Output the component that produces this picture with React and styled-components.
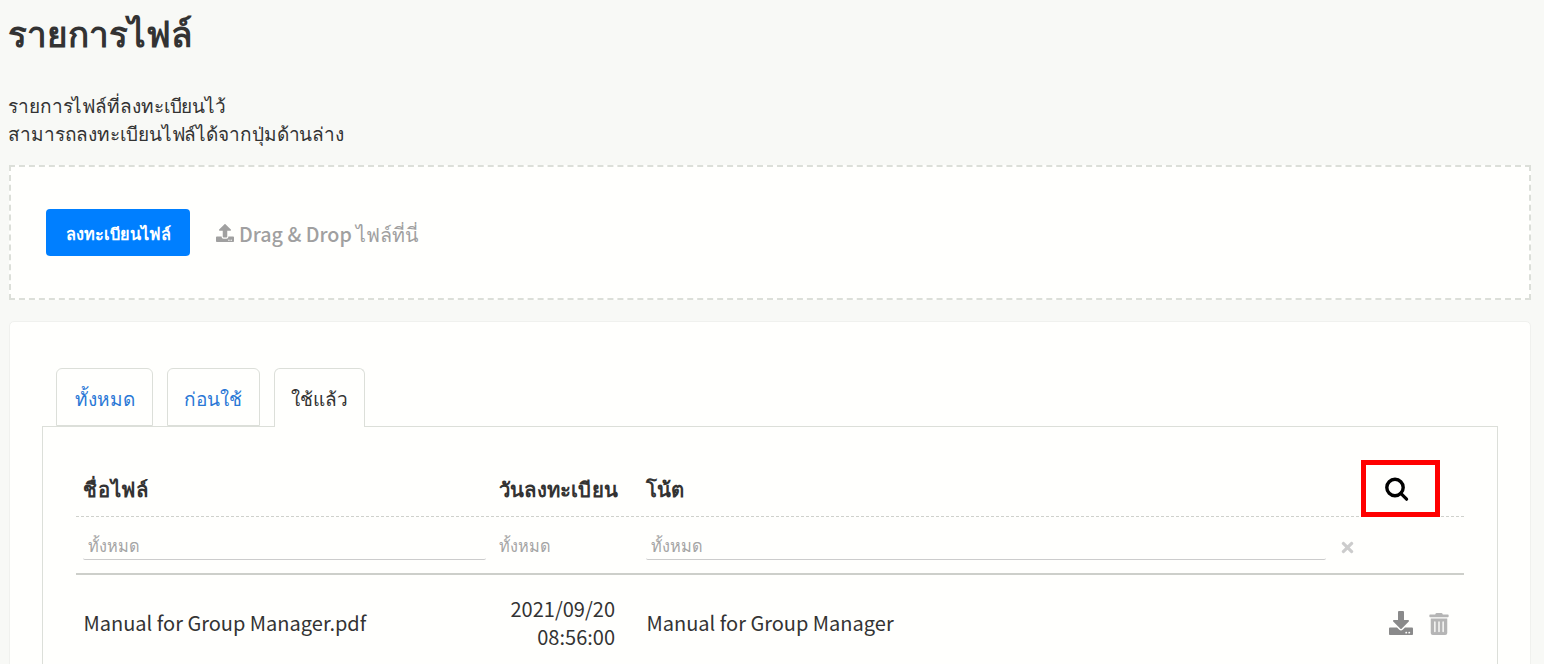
import React from 'react';
import styled, { createGlobalStyle } from 'styled-components';
import { FaUpload, FaDownload, FaTrashAlt, FaTimes } from 'react-icons/fa';

const Global = createGlobalStyle`
  html, body { margin: 0; height: 664px; overflow: hidden; background: #f8f9f6; }
  body { font-family: "Noto Sans CJK JP", "Noto Sans", "DejaVu Sans", sans-serif; color: #333; }
  * { box-sizing: border-box; }
`;
const Page = styled.div`padding: 0 13px 0 9px; height: 664px; overflow: hidden;`;
const Title = styled.h1`margin: 0 0 0 -1px; padding-top: 10px; height: 91px; font-size: 35px; line-height: 44px; font-weight: 700; color: #333;`;
const Desc = styled.p`margin: 0 0 0 -1px; font-size: 19px; letter-spacing: -0.1px; line-height: 28px; height: 56px; color: #333;`;
const Drop = styled.div`
  margin-top: 18px; height: 135px; background: #fffffd; border: 2px dashed #dcdfd9;
  display: flex; align-items: center; padding-left: 35px; gap: 26px;
`;
const Primary = styled.button`
  width: 144px; height: 47px; padding: 2px 0 0; border: 0; border-radius: 4px; background: #007fff; color: #fff;
  font: 700 16.3px "Noto Sans CJK JP", "Noto Sans", sans-serif;
`;
const Hint = styled.span`display: flex; align-items: center; gap: 5px; padding-top: 4px; color: #a0a0a0; font-size: 19.7px; font-weight: 500; svg { font-size: 18px; margin-top: -4px; }`;
const Card = styled.section`margin-top: 21px; height: 400px; background: #fffffd; border: 1px solid #f0f1ee; border-radius: 5px; padding: 46px 32px 0;`;
const Tabs = styled.div`display: flex; gap: 14px; padding-left: 14px; height: 59px;`;
const Tab = styled.div`
  width: ${p => p.$w}px; height: ${p => (p.$active ? 59 : 58)}px; border: 1px solid #dcdfd9; border-radius: 6px 6px 0 0; text-align: center; white-space: nowrap;
  ${p => p.$active ? 'border-bottom: 0; background: #fffffd; position: relative; z-index: 1; color: #333;' : 'color: #2a78d6;'}
  font-size: 19px; line-height: 58px;
`;
const Pane = styled.div`margin-top: -1px; height: 300px; border: 1px solid #dcdfd9; padding: 0 33px;`;
const Grid = styled.div`display: grid; grid-template-columns: 415px 148px 694px 131px;`;
const HeadRow = styled(Grid)`height: 90px; border-bottom: 1px dashed #cfd1cc; align-items: end; padding-bottom: 14px;`;
const Th = styled.div`padding-left: ${p => p.$pl ?? 7}px; font-size: 20.3px; font-weight: 700; line-height: 28px; color: #333; white-space: nowrap; letter-spacing: ${p => p.$ls ?? 0}px;`;
const SearchCell = styled.div`position: relative; height: 28px; display: flex; align-items: center; padding-left: 51px; svg { display: block; margin-top: 3px; }`;
const RedBox = styled.div`position: absolute; left: 28px; top: -14px; width: 79px; height: 57px; border: 5px solid #f00;`;
const FilterRow = styled(Grid)`height: 58px; border-bottom: 2px solid #cdcfca; padding-top: 13px;`;
const FilterCell = styled.div`padding: 0 ${p => p.$pr ?? 7}px 0 ${p => p.$pl ?? 7}px;`;
const Filter = styled.div`height: 30px; border-bottom: ${p => (p.$plain ? 0 : 1)}px solid #ccc; padding-left: ${p => p.$indent ?? 4}px; color: #a5a5a5; font-size: 16.3px; line-height: 30px; border-radius: 0 0 2px 2px; white-space: nowrap;`;
const Clear = styled.div`padding: 6px 0 0 6px; color: #ccc; font-size: 17px;`;
const Row = styled(Grid)`height: 96px; align-items: center; font-size: 20px; line-height: 28px;`;
const Cell = styled.div`padding: 0 7.5px; color: #333;`;
const DateCell = styled(Cell)`text-align: right; padding-right: 24px; white-space: nowrap;`;
const Actions = styled.div`display: flex; align-items: center; gap: 15px; padding-left: 56px;`;
const Dl = styled.span`color: #8a8a8a; font-size: 24px; display: flex;`;
const Tr = styled.span`color: #b5b5b5; font-size: 22px; display: flex; margin-top: 2px;`;

const SearchIcon = () => (
  <svg width="25" height="25" viewBox="0 0 25 25" fill="none" stroke="#000" strokeLinecap="round">
    <circle cx="11" cy="10.5" r="8.2" strokeWidth="3.4" />
    <path d="M16.8 16.3 L22.6 22.2" strokeWidth="3.2" />
  </svg>
);

export default function App() {
  return (
    <Page>
      <Global />
      <Title>รายการไฟล์</Title>
      <Desc>รายการไฟล์ที่ลงทะเบียนไว้<br />สามารถลงทะเบียนไฟล์ได้จากปุ่มด้านล่าง</Desc>
      <Drop>
        <Primary>ลงทะเบียนไฟล์</Primary>
        <Hint><FaUpload />Drag &amp; Drop ไฟล์ที่นี่</Hint>
      </Drop>
      <Card>
        <Tabs>
          <Tab $w={97}>ทั้งหมด</Tab>
          <Tab $w={92.5}>ก่อนใช้</Tab>
          <Tab $w={91} $active>ใช้แล้ว</Tab>
        </Tabs>
        <Pane>
          <HeadRow>
            <Th $ls={0.8}>ชื่อไฟล์</Th>
            <Th $pl={8} $ls={0.2}>วันลงทะเบียน</Th>
            <Th>โน้ต</Th>
            <SearchCell><RedBox /><SearchIcon /></SearchCell>
          </HeadRow>
          <FilterRow>
            <FilterCell $pl={7} $pr={5}><Filter $indent={5}>ทั้งหมด</Filter></FilterCell>
            <FilterCell $pl={4}><Filter $plain>ทั้งหมด</Filter></FilterCell>
            <FilterCell $pl={7} $pr={7}><Filter $indent={5}>ทั้งหมด</Filter></FilterCell>
            <Clear><FaTimes /></Clear>
          </FilterRow>
          <Row>
            <Cell>Manual for Group Manager.pdf</Cell>
            <DateCell>2021/09/20<br />08:56:00</DateCell>
            <Cell>Manual for Group Manager</Cell>
            <Actions><Dl><FaDownload /></Dl><Tr><FaTrashAlt /></Tr></Actions>
          </Row>
        </Pane>
      </Card>
    </Page>
  );
}
